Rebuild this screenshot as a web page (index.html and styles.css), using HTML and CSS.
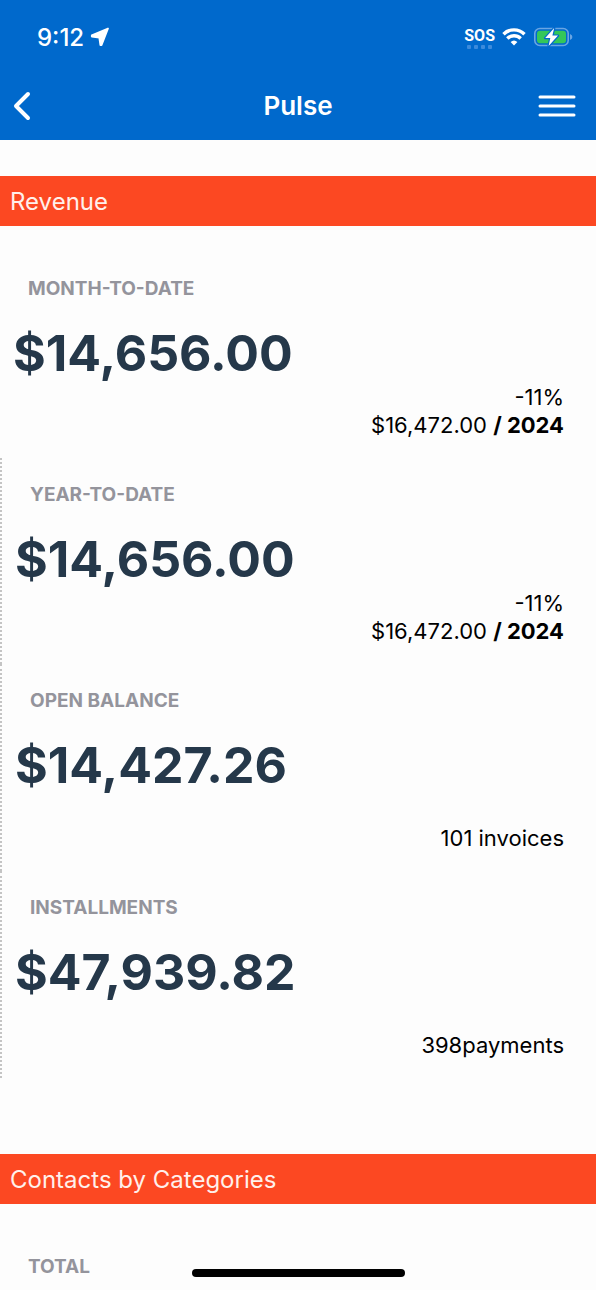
FILE: index.html
```html
<!DOCTYPE html>
<html lang="en">
<head>
  <meta charset="UTF-8">
  <meta name="viewport" content="width=device-width, initial-scale=1.0">
  <title>Pulse</title>
  <link rel="stylesheet" href="styles.css">
</head>
<body>
  <header class="header">
    <div class="status-bar">
      <div class="status-left">
        <span class="time">9:12</span>
        <svg class="location" width="20" height="20" viewBox="0 0 20 20">
          <path d="M18 1.5 L1.8 8.4 L1.8 9.6 L9.3 10.5 L10.4 18 L11.6 18 Z" fill="#fff" stroke="#fff" stroke-width="1.8" stroke-linejoin="round"/>
        </svg>
      </div>
      <div class="status-right">
        <div class="sos">
          <span class="sos-text">SOS</span>
          <svg width="26" height="4" viewBox="0 0 26 4" fill="#3c8bdc">
            <rect x="0" width="4" height="4" rx="1"/>
            <rect x="7" width="4" height="4" rx="1"/>
            <rect x="14" width="4" height="4" rx="1"/>
            <rect x="21" width="4" height="4" rx="1"/>
          </svg>
        </div>
        <svg width="24" height="18" viewBox="0 0 24 18" fill="none" stroke="#fff" stroke-width="3.4">
          <path d="M1.5 6.2 C7.3 0.4 16.7 0.4 22.5 6.2"/>
          <path d="M5.3 10.5 C9 6.9 15 6.9 18.7 10.5"/>
          <path d="M8.6 14 Q12 11 15.4 14 L12 17.4 Z" fill="#fff" stroke="none"/>
        </svg>
        <svg width="40" height="20" viewBox="0 0 40 20">
          <rect x="1.8" y="1.5" width="33.4" height="17" rx="5" fill="none" stroke="#69a5e3" stroke-width="1.6"/>
          <rect x="4" y="3.8" width="29" height="12.4" rx="3" fill="#34c759"/>
          <path d="M37 7 Q39.4 7.8 39.4 10 Q39.4 12.2 37 13 Z" fill="#69a5e3"/>
          <path d="M21.2 1 L12.2 11 H17.3 L15.6 19 L25 8.6 H19.4 Z" fill="#fff" stroke="#0069cc" stroke-width="2.4" stroke-linejoin="round" paint-order="stroke"/>
        </svg>
      </div>
    </div>
    <nav class="nav-bar">
      <button class="nav-btn" type="button" aria-label="Back">
        <svg width="20" height="30" viewBox="0 0 20 30" fill="none" stroke="#fff" stroke-width="4" stroke-linecap="round" stroke-linejoin="round">
          <path d="M16 3 L4 15 L16 27"/>
        </svg>
      </button>
      <h1 class="nav-title">Pulse</h1>
      <button class="nav-btn nav-menu" type="button" aria-label="Menu">
        <svg width="38" height="24" viewBox="0 0 38 24" stroke="#fff" stroke-width="3" stroke-linecap="round">
          <path d="M2 3 H36 M2 12 H36 M2 21 H36"/>
        </svg>
      </button>
    </nav>
  </header>

  <main>
    <section class="section">
      <h2 class="section-title">Revenue</h2>
      <div class="cards">
        <div class="card">
          <h3 class="label">MONTH-TO-DATE</h3>
          <p class="amount">$14,656.00</p>
          <div class="details">
            <span>-11%</span>
            <span>$16,472.00 <b>/ 2024</b></span>
          </div>
        </div>
        <div class="card divided">
          <h3 class="label">YEAR-TO-DATE</h3>
          <p class="amount">$14,656.00</p>
          <div class="details">
            <span>-11%</span>
            <span>$16,472.00 <b>/ 2024</b></span>
          </div>
        </div>
        <div class="card divided">
          <h3 class="label">OPEN BALANCE</h3>
          <p class="amount">$14,427.26</p>
          <div class="details single">
            <span>101 invoices</span>
          </div>
        </div>
        <div class="card divided">
          <h3 class="label">INSTALLMENTS</h3>
          <p class="amount">$47,939.82</p>
          <div class="details single">
            <span>398payments</span>
          </div>
        </div>
      </div>
    </section>

    <section class="section">
      <h2 class="section-title">Contacts by Categories</h2>
      <div class="totals">
        <h3 class="label">TOTAL</h3>
      </div>
    </section>
  </main>

  <div class="home-indicator"></div>
</body>
</html>
```
FILE: styles.css
```css
* {
  box-sizing: border-box;
}
body {
  margin: 0;
  font-family: Inter, "Liberation Sans", sans-serif;
  background-color: #fdfdfd;
  color: #000;
}
h1, h2, h3, p {
  margin: 0;
}

/* header */
.header {
  background-color: #0069cc;
  color: #fff;
}
.status-bar {
  display: flex;
  justify-content: space-between;
  align-items: center;
  height: 72px;
  padding: 2px 23px 0 37px;
}
.status-left {
  display: flex;
  align-items: center;
  gap: 6px;
}
.time {
  font-size: 24px;
  font-weight: 500;
}
.status-right {
  display: flex;
  align-items: center;
  gap: 7px;
}
.sos {
  display: flex;
  flex-direction: column;
  align-items: center;
  padding-top: 2px;
}
.sos-text {
  font-family: Roboto, sans-serif;
  font-size: 16px;
  line-height: 18px;
  font-weight: 700;
}
.nav-bar {
  display: grid;
  grid-template-columns: 1fr auto 1fr;
  align-items: center;
  height: 68px;
  padding: 0 20px 0 12px;
}
.nav-btn {
  display: flex;
  justify-self: start;
  padding: 0;
  border: none;
  background: none;
  cursor: pointer;
}
.nav-menu {
  justify-self: end;
}
.nav-title {
  padding: 0 0 2px 8px;
  font-size: 26px;
  font-weight: 600;
}

/* sections */
.section {
  padding-top: 36px;
}
.section-title {
  padding: 2px 10px 0;
  background-color: #fc4822;
  color: #fff0eb;
  font-size: 24px;
  line-height: 48px;
  font-weight: 400;
}
.cards {
  padding: 26px 0 40px;
}
.totals {
  padding-top: 51px;
}
.card {
  padding: 25px 32px 19px 0;
}
.divided {
  border-left: 2px dotted #c4c4c4;
}
.label {
  padding-left: 28px;
  color: #94949c;
  font-size: 19px;
  line-height: 24px;
  font-weight: 700;
}
.amount {
  margin-top: 22px;
  padding-left: 13px;
  color: #25384a;
  font-size: 50px;
  line-height: 60px;
  font-weight: 700;
}
.details {
  display: flex;
  flex-direction: column;
  justify-content: flex-end;
  align-items: flex-end;
  font-size: 22px;
  line-height: 28px;
}
.single {
  min-height: 57px;
}

.home-indicator {
  position: fixed;
  bottom: 13px;
  left: 50%;
  width: 213px;
  height: 8px;
  margin-left: -106px;
  border-radius: 4px;
  background-color: #000;
}
```
